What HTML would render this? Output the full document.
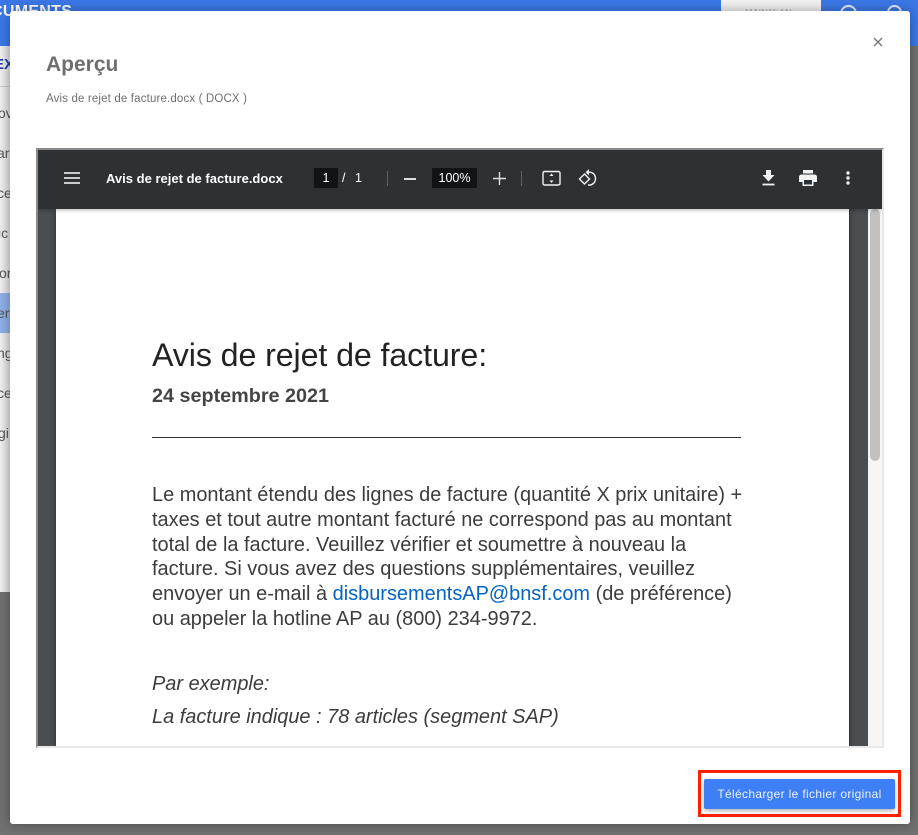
<!DOCTYPE html>
<html lang="fr"><head><meta charset="utf-8"><title>Aperçu</title>
<style>
*{box-sizing:border-box}
html,body{margin:0;padding:0}
body{width:918px;height:835px;overflow:hidden;position:relative;background:#717171;font-family:"Liberation Sans",sans-serif}
.a{position:absolute;white-space:nowrap}
.tb{color:#fff}
.doc{color:#333}
</style></head><body>
<div class="a" style="left:0;top:0;width:918px;height:46px;background:#3b78e7"></div>
<div class="a" style="left:-9px;top:3px;font-size:16px;font-weight:700;color:#fff;letter-spacing:.3px">CUMENTS</div>
<div class="a" style="left:721px;top:0;width:100px;height:12px;background:#f2f2f2"></div>
<div class="a" style="left:745px;top:9px;width:55px;height:3px;font-size:9px;color:#aaa;overflow:hidden;line-height:6px">MAINTEAN</div>
<div class="a" style="left:840px;top:5px;width:17px;height:17px;border:2px solid #e4ecfb;border-radius:50%"></div>
<div class="a" style="left:887px;top:5px;width:15px;height:15px;border:2px solid #e4ecfb;border-radius:50%"></div>
<div class="a" style="left:0;top:46px;width:10px;height:546px;background:linear-gradient(90deg,#f1f1f1,#dedede);overflow:hidden;color:#555;font-size:14px">
  <div class="a" style="left:-6px;top:10px;font-weight:700;color:#1c3fae;font-size:15px">EX</div>
  <div class="a" style="left:0;top:40px;width:10px;height:1px;background:#c8c8c8"></div>
  <div class="a" style="left:-2px;top:59px">ov</div>
  <div class="a" style="left:-3px;top:99px">ar</div>
  <div class="a" style="left:-3px;top:139px">ce</div>
  <div class="a" style="left:-2px;top:179px">ic</div>
  <div class="a" style="left:-1px;top:219px">or</div>
  <div class="a" style="left:0;top:247px;width:10px;height:40px;background:#8eb0e8"></div>
  <div class="a" style="left:-3px;top:259px">er</div>
  <div class="a" style="left:-3px;top:299px">ng</div>
  <div class="a" style="left:-3px;top:339px">ce</div>
  <div class="a" style="left:-2px;top:379px">gi</div>
</div>

<div class="a" style="left:10px;top:11px;width:900px;height:813px;background:#fff;border-radius:3px;box-shadow:0 0 12px rgba(0,0,0,.35)"></div>
<div class="a" style="left:46px;top:52px;font-size:21px;font-weight:700;color:#6f6f6f;line-height:25px">Aperçu</div>
<div class="a" style="left:46px;top:92px;font-size:11.5px;color:#6f6f6f;line-height:14px;letter-spacing:.15px">Avis de rejet de facture.docx ( DOCX )</div>
<svg class="a" style="left:873px;top:36px" width="11" height="12" viewBox="0 0 11 12"><path d="M1 2l8 8M9 2l-8 8" stroke="#757575" stroke-width="1.3" fill="none"/></svg>

<!-- viewer -->
<div class="a" style="left:36px;top:148px;width:848px;height:600px;overflow:hidden;border-top:2px solid #8a8a8a;border-left:2px solid #8a8a8a;border-right:2px solid #e8e8e8;border-bottom:2px solid #e8e8e8;background:#4a4e51">
  <div class="a" style="left:794px;top:59px;width:18px;height:560px;background:linear-gradient(90deg,#4a4e51 60%,#3a3d40)"></div>
  <div class="a" style="left:830px;top:0;width:14px;height:600px;background:#f6f6f6"></div>
  <div class="a" style="left:832px;top:59px;width:10px;height:252px;background:#c1c1c1;border-radius:5px"></div>
  <div class="a" style="left:18px;top:59px;width:793px;height:560px;background:#fff;box-shadow:0 0 6px rgba(0,0,0,.4)"></div>
  <div class="a" style="left:0;top:0;width:844px;height:59px;background:#2e3134;box-shadow:0 1px 4px rgba(0,0,0,.3)"></div>
</div>

<!-- toolbar -->
<svg class="a" style="left:64px;top:172px" width="16" height="12" viewBox="0 0 16 12"><path d="M0 1h16M0 6h16M0 11h16" stroke="#fff" stroke-width="1.4"/></svg>
<div class="a tb" style="left:106px;top:171px;font-size:13px;font-weight:700;line-height:15px;letter-spacing:.01px">Avis de rejet de facture.docx</div>
<div class="a" style="left:314px;top:168px;width:24px;height:20px;background:#121314"></div>
<div class="a tb" style="left:314px;top:171px;width:24px;text-align:center;font-size:12.5px;line-height:15px">1</div>
<div class="a tb" style="left:342px;top:171px;font-size:12.5px;line-height:15px">/</div>
<div class="a tb" style="left:355px;top:171px;font-size:12.5px;line-height:15px">1</div>
<div class="a" style="left:387px;top:171px;width:1px;height:15px;background:#5f6366"></div>
<div class="a" style="left:404px;top:178px;width:12px;height:1.5px;background:#ddd"></div>
<div class="a" style="left:432px;top:168px;width:45px;height:20px;background:#121314"></div>
<div class="a tb" style="left:432px;top:171px;width:45px;text-align:center;font-size:12.5px;line-height:15px">100%</div>
<svg class="a" style="left:493px;top:172px" width="13" height="13" viewBox="0 0 13 13"><path d="M0 6.500h13M6.500 0v13" stroke="#ddd" stroke-width="1.400"/></svg>
<div class="a" style="left:521px;top:171px;width:1px;height:15px;background:#5f6366"></div>
<svg class="a" style="left:542px;top:170px" width="20" height="17" viewBox="0 0 20 17"><rect x="1" y="1.500" width="17" height="13.500" rx="1.500" fill="none" stroke="#f1f1f1" stroke-width="1.400"/><path d="M9.500 3.500l-2 2.500h4zM9.500 13l-2-2.500h4z" fill="#f1f1f1"/></svg>
<svg class="a" style="left:578px;top:168px" width="20" height="20" viewBox="0 0 20 20"><path d="M1.500 11l5-5 5 5-5 5z" fill="none" stroke="#f1f1f1" stroke-width="1.400"/><path d="M8.500 4.500c5-1.500 9 1.500 9 6 0 4-3 7-7.500 6.500" fill="none" stroke="#f1f1f1" stroke-width="1.400"/><path d="M11 1v6.500L7.500 4.200z" fill="#f1f1f1"/></svg>
<svg class="a" style="left:762px;top:170px" width="13" height="16" viewBox="0 0 13 16"><path d="M4 0h5v5h3.500L6.500 11.500.5 5H4z" fill="#f1f1f1"/><path d="M.5 14.500h12" stroke="#f1f1f1" stroke-width="1.800"/></svg>
<svg class="a" style="left:799px;top:170px" width="18" height="16" viewBox="0 0 18 16"><path d="M4 0h10v3.500H4zM2.500 4.500h13A2.500 2.500 0 0 1 18 7v5h-3.500v4h-11v-4H0V7a2.500 2.500 0 0 1 2.500-2.500z" fill="#f1f1f1"/><rect x="5" y="10" width="8" height="4.500" fill="#2e3134"/></svg>
<svg class="a" style="left:846px;top:171px" width="4" height="14" viewBox="0 0 4 14"><circle cx="2" cy="2" r="1.700" fill="#f1f1f1"/><circle cx="2" cy="7" r="1.700" fill="#f1f1f1"/><circle cx="2" cy="12" r="1.700" fill="#f1f1f1"/></svg>

<!-- document -->
<div class="a" style="left:152px;top:336px;font-size:32.2px;line-height:38px;color:#222;letter-spacing:-.1px">Avis de rejet de facture:</div>
<div class="a" style="left:152px;top:385px;font-size:19.800px;font-weight:700;line-height:23px;color:#444">24 septembre 2021</div>
<div class="a" style="left:152px;top:437px;width:589px;height:1px;background:#333"></div>
<div class="a doc" style="left:152px;top:483px;font-size:19.960px;line-height:24.800px;color:#3c3c3c">Le montant étendu des lignes de facture (quantité X prix unitaire) +<br>taxes et tout autre montant facturé ne correspond pas au montant<br>total de la facture. Veuillez vérifier et soumettre à nouveau la<br>facture. Si vous avez des questions supplémentaires, veuillez<br>envoyer un e-mail à <span style="color:#0563c1">disbursementsAP@bnsf.com</span> (de préférence)<br>ou appeler la hotline AP au (800) 234-9972.</div>
<div class="a doc" style="left:152px;top:672px;font-size:19.960px;line-height:25px;font-style:italic;color:#3c3c3c">Par exemple:</div>
<div class="a doc" style="left:152px;top:705px;font-size:19.960px;line-height:25px;font-style:italic;color:#3c3c3c">La facture indique : 78 articles (segment SAP)</div>

<!-- button -->
<div class="a" style="left:698px;top:770px;width:203px;height:47px;border:3px solid #ff2200"></div>
<div class="a" style="left:704px;top:779px;width:191px;height:30px;background:#3f7ff5;border-radius:2px;box-shadow:0 2px 4px rgba(0,0,0,.3);color:#eaf1fe;font-size:12px;line-height:30px;text-align:center;letter-spacing:.33px">Télécharger le fichier original</div>
</body></html>
